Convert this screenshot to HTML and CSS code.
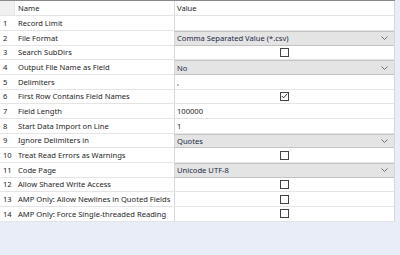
FILE: index.html
```html
<!DOCTYPE html>
<html>
<head>
  <title>Input Configuration</title>
  <link rel="stylesheet" href="styles.css">
</head>
<body>
  <div class="grid">
    <div class="row head">
      <div class="num"></div>
      <div class="name">Name</div>
      <div class="value">Value</div>
    </div>
    <div class="row">
      <div class="num">1</div>
      <div class="name">Record Limit</div>
      <div class="value"></div>
    </div>
    <div class="row">
      <div class="num">2</div>
      <div class="name">File Format</div>
      <div class="value combo">Comma Separated Value (*.csv)<svg class="chevron" width="7" height="4" viewBox="0 0 7 4"><path d="M0.5 0.5 L3.5 3.5 L6.5 0.5" fill="none" stroke="#707070"/></svg></div>
    </div>
    <div class="row">
      <div class="num">3</div>
      <div class="name">Search SubDirs</div>
      <div class="value check"><span class="box"></span></div>
    </div>
    <div class="row">
      <div class="num">4</div>
      <div class="name">Output File Name as Field</div>
      <div class="value combo">No<svg class="chevron" width="7" height="4" viewBox="0 0 7 4"><path d="M0.5 0.5 L3.5 3.5 L6.5 0.5" fill="none" stroke="#707070"/></svg></div>
    </div>
    <div class="row">
      <div class="num">5</div>
      <div class="name">Delimiters</div>
      <div class="value">,</div>
    </div>
    <div class="row">
      <div class="num">6</div>
      <div class="name">First Row Contains Field Names</div>
      <div class="value check"><span class="box"><svg width="7" height="6" viewBox="0 0 7 6"><path d="M0.8 3 L2.6 4.8 L6.3 0.8" fill="none" stroke="#333" stroke-width="1"/></svg></span></div>
    </div>
    <div class="row">
      <div class="num">7</div>
      <div class="name">Field Length</div>
      <div class="value">100000</div>
    </div>
    <div class="row">
      <div class="num">8</div>
      <div class="name">Start Data Import on Line</div>
      <div class="value">1</div>
    </div>
    <div class="row">
      <div class="num">9</div>
      <div class="name">Ignore Delimiters in</div>
      <div class="value combo">Quotes<svg class="chevron" width="7" height="4" viewBox="0 0 7 4"><path d="M0.5 0.5 L3.5 3.5 L6.5 0.5" fill="none" stroke="#707070"/></svg></div>
    </div>
    <div class="row">
      <div class="num">10</div>
      <div class="name">Treat Read Errors as Warnings</div>
      <div class="value check"><span class="box"></span></div>
    </div>
    <div class="row">
      <div class="num">11</div>
      <div class="name">Code Page</div>
      <div class="value combo">Unicode UTF-8<svg class="chevron" width="7" height="4" viewBox="0 0 7 4"><path d="M0.5 0.5 L3.5 3.5 L6.5 0.5" fill="none" stroke="#707070"/></svg></div>
    </div>
    <div class="row">
      <div class="num">12</div>
      <div class="name">Allow Shared Write Access</div>
      <div class="value check"><span class="box"></span></div>
    </div>
    <div class="row">
      <div class="num">13</div>
      <div class="name">AMP Only: Allow Newlines in Quoted Fields</div>
      <div class="value check"><span class="box"></span></div>
    </div>
    <div class="row">
      <div class="num">14</div>
      <div class="name">AMP Only: Force Single-threaded Reading</div>
      <div class="value check"><span class="box"></span></div>
    </div>
  </div>
</body>
</html>
```

FILE: styles.css
```css
body {
  margin: 0;
  padding: 0;
  background-color: #e9edf8;
  font-family: "Noto Sans", "Liberation Sans", sans-serif;
  font-size: 7.6px;
  color: #1e1e1e;
  height: 100vh;
}

.grid {
  width: 395px;
  background-color: #fff;
  border-top: 1px solid #8a8a8a;
}

.row {
  display: grid;
  grid-template-columns: 15px 159px 1fr;
  height: 14.667px;
  box-sizing: border-box;
  border-bottom: 1px solid #e4e4e4;
  border-right: 1px solid #d8d8d8;
}

.row.head {
  height: 15.333px;
  border-bottom: 1px solid #e4e4e4;
}

.row > div {
  display: flex;
  align-items: center;
  white-space: nowrap;
  overflow: hidden;
}

.num {
  padding-left: 3px;
}

.head .num {
  background-color: #f0f0f0;
  border-right: 1px solid #e4e4e4;
}

.name {
  padding-left: 3px;
}

.value {
  border-left: 1px solid #d8d8d8;
  padding-left: 2px;
}

.combo {
  background-color: #e4e4e4;
  border-top: 1px solid #c4c4c4;
  border-bottom: 1px solid #c4c4c4;
  margin-bottom: -1px;
  justify-content: space-between;
  padding-right: 6px;
  color: #1c2a44;
}

.chevron {
  flex-shrink: 0;
}

.check {
  justify-content: center;
  padding-left: 0;
}

.box {
  width: 9px;
  height: 9px;
  box-sizing: border-box;
  border: 1px solid #444;
  background-color: #fff;
  display: flex;
  align-items: center;
  justify-content: center;
}
```
